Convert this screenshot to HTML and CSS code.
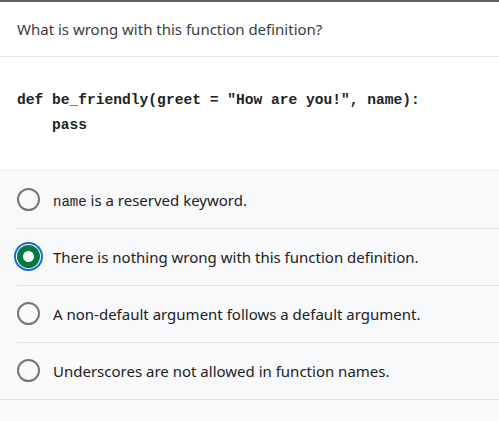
FILE: index.html
```html
<!DOCTYPE html>
<html lang="en">
<head>
<meta charset="utf-8">
<link rel="stylesheet" href="styles.css">
</head>
<body>
<div class="card">
  <div class="question">What is wrong with this function definition?</div>
  <div class="code"><pre>def be_friendly(greet = "How are you!", name):
    pass</pre></div>
  <div class="options">
    <label class="option"><span class="radio"></span><span class="text"><code>name</code> is a reserved keyword.</span></label>
    <label class="option"><span class="radio checked"></span><span class="text">There is nothing wrong with this function definition.</span></label>
    <label class="option"><span class="radio"></span><span class="text">A non-default argument follows a default argument.</span></label>
    <label class="option last"><span class="radio"></span><span class="text">Underscores are not allowed in function names.</span></label>
  </div>
</div>
</body>
</html>
```
FILE: styles.css
```css
html, body {
  margin: 0;
  padding: 0;
  background: #f8f9fa;
}
body {
  font-family: "Noto Sans", "Open Sans", sans-serif;
  color: #202124;
}
.card {
  border-top: 2px solid #5f6368;
}
.question {
  background: #fff;
  height: 55px;
  box-sizing: border-box;
  padding: 0 17px;
  display: flex;
  align-items: center;
  font-size: 15px;
  color: #3c3c3c;
  border-bottom: 1px solid #e8e8e8;
}
.code {
  background: #fff;
  height: 113px;
  box-sizing: border-box;
  padding: 31px 17px 0;
}
.code pre {
  margin: 0;
  font-family: "Liberation Mono", "DejaVu Sans Mono", monospace;
  font-weight: bold;
  font-size: 14.6px;
  line-height: 25px;
  color: #222;
}
.options {
  border-top: 1px solid #eceef0;
  border-bottom: 1px solid #e3e3e3;
  padding-top: 1px;
}
.option {
  display: flex;
  align-items: center;
  height: 56px;
  margin-left: 17px;
  border-bottom: 1px solid #e3e3e3;
  font-size: 15px;
  color: #202124;
}
.option.last {
  border-bottom: none;
}
.radio {
  width: 23px;
  height: 23px;
  box-sizing: border-box;
  border: 2px solid #767676;
  border-radius: 50%;
  flex: none;
  margin-top: -2px;
  margin-right: 13px;
  background: transparent;
}
.radio.checked {
  border: 6px solid #067a3f;
  background: #fff;
  box-shadow: 0 0 0 1px #fff, 0 0 0 3px #1a6ccc;
}
.text code {
  font-family: "Liberation Mono", "DejaVu Sans Mono", monospace;
  font-size: 14px;
}
```
